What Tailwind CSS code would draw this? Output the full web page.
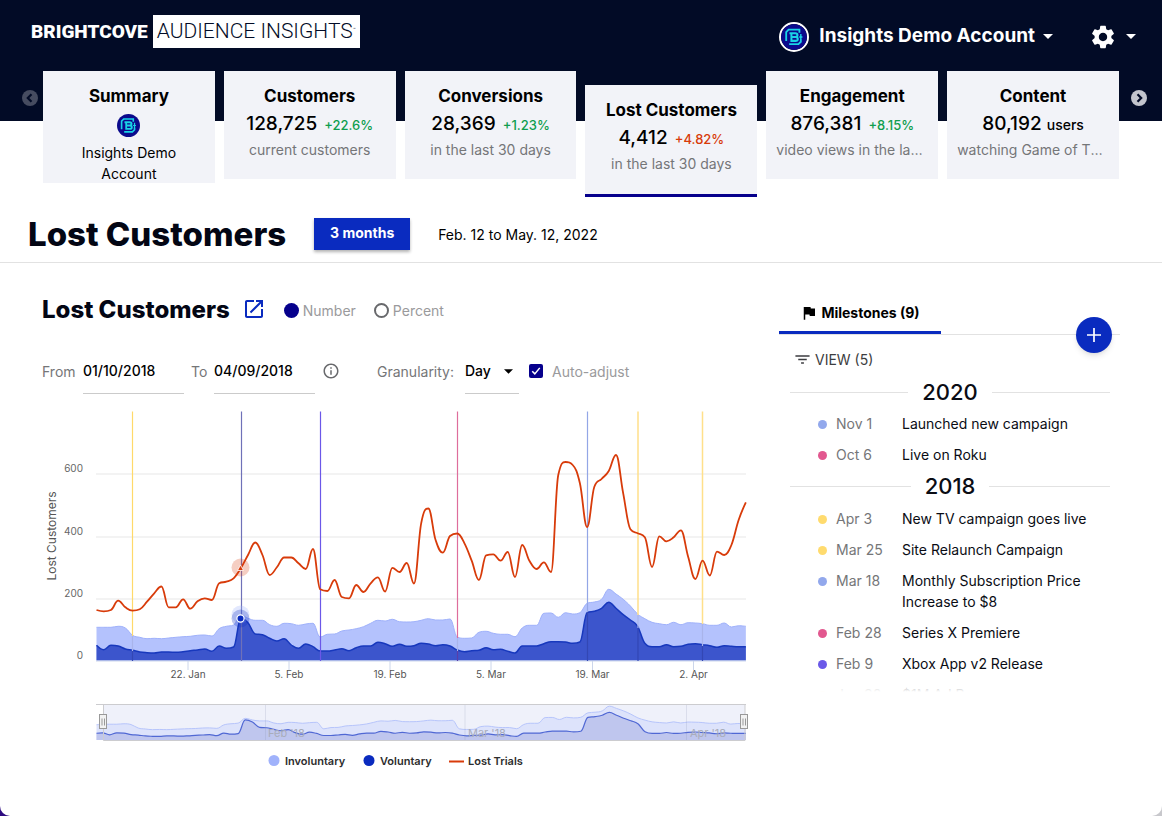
<!DOCTYPE html>
<html lang="en">
<head>
<meta charset="utf-8">
<meta name="viewport" content="width=device-width, initial-scale=1">
<title>Audience Insights - Lost Customers</title>
<script src="https://cdn.jsdelivr.net/npm/@tailwindcss/browser@4"></script>
</head>
<body class="bg-linear-to-r from-[#2d0a80] to-[#c8c8cc] font-['Inter',sans-serif] text-black">
<svg class="hidden" aria-hidden="true">
  <symbol id="brand" viewBox="0 0 24 24">
    <circle cx="12" cy="12" r="12" fill="#0b0a8c"/>
    <path d="M17 8V5.200H7L4.800 7.400v8.400M7.500 18.600h8.600l2.200-2.200v-2" fill="none" stroke="#19d3e6" stroke-width="1.700"/>
    <path d="M18.300 9.200v5.600M16.800 12h3" fill="none" stroke="#19d3e6" stroke-width="1.300"/>
    <path d="M7.800 8.600h5.400q2 0 2 1.700t-2 1.700h-3.400 3.600q2.100 0 2.100 1.800t-2.100 1.800H9.600V8.600" fill="none" stroke="#19d3e6" stroke-width="1.900"/>
  </symbol>
</svg>
<div class="min-h-screen bg-white rounded-b-[10px] overflow-hidden">
  <header class="h-[121px] bg-[#020b26] pl-[31px] pr-[26px]">
    <div class="h-[73px] flex items-center justify-between">
      <a href="#" class="flex items-center gap-[5px] text-white -mt-[10px] whitespace-nowrap font-['Roboto',sans-serif]">
        <span class="font-black text-[19px] leading-8">BRIGHTCOVE</span>
        <span class="bg-white text-[#020b26] h-[33px] w-[207px] flex items-center justify-center font-light text-[21px]">AUDIENCE INSIGHTS<sup class="text-[5px]">™</sup></span>
      </a>
      <div class="flex items-center">
        <button class="flex items-center text-white font-bold text-[19px]">
          <svg class="size-[30px] rounded-full border-2 border-white mr-[10px]"><use href="#brand"/></svg>
          Insights Demo Account
          <svg class="w-[10px] h-[5px] ml-2" viewBox="0 0 10 5"><path d="M0 0h10L5 5z" fill="#fff"/></svg>
        </button>
        <button class="flex items-center ml-9 gap-[9px]" aria-label="Settings">
          <svg class="size-[28px]" viewBox="0 0 24 24" fill="#fff"><path d="M19.140 12.940c.04-.3.06-.61.06-.94 0-.32-.02-.64-.07-.94l2.030-1.580c.18-.14.23-.41.12-.61l-1.920-3.320c-.12-.22-.37-.29-.59-.22l-2.390.96c-.5-.38-1.030-.7-1.620-.94l-.36-2.540c-.04-.24-.24-.41-.48-.41h-3.840c-.24 0-.43.17-.47.41l-.36 2.540c-.59.24-1.130.57-1.620.94l-2.390-.96c-.22-.08-.47 0-.59.22L2.740 8.870c-.12.21-.08.47.12.61l2.030 1.580c-.05.3-.09.63-.09.94s.02.64.07.94l-2.030 1.580c-.18.14-.23.41-.12.61l1.920 3.320c.12.22.37.29.59.22l2.390-.96c.5.38 1.030.7 1.620.94l.36 2.540c.05.24.24.41.48.41h3.840c.24 0 .44-.17.47-.41l.36-2.540c.59-.24 1.130-.56 1.620-.94l2.390.96c.22.08.47 0 .59-.22l1.920-3.320c.12-.22.07-.47-.12-.61l-2.010-1.580zM12 15.600c-1.980 0-3.600-1.620-3.600-3.600s1.620-3.600 3.600-3.600 3.600 1.620 3.600 3.600-1.620 3.600-3.600 3.600z"/></svg>
          <svg class="w-[10px] h-[5px]" viewBox="0 0 10 5"><path d="M0 0h10L5 5z" fill="#fff"/></svg>
        </button>
      </div>
    </div>
  </header>

  <nav class="relative -mt-[50px] flex items-start pl-[22px] pr-[15px] h-[126px]" aria-label="Metrics">
    <button class="mt-[19px] mr-[5px] shrink-0 text-[#464c60]" aria-label="Previous"><svg class="size-4" viewBox="0 0 16 16"><circle cx="8" cy="8" r="8" fill="currentColor"/><path d="M9.500 4.200 5.800 8l3.700 3.800" fill="none" stroke="#020b26" stroke-width="2.200"/></svg></button>
    <div class="flex-1 grid grid-cols-6 gap-[9px] items-start text-center">
      <a href="#" class="bg-[#f2f3f8] h-28 pt-[13px] px-[10px] block">
        <h3 class="font-bold text-[17px] leading-6">Summary</h3>
        <svg class="size-[23px] mx-auto mt-[6px]"><use href="#brand"/></svg>
        <p class="text-[14px] leading-[21px] mt-[5px] px-5">Insights Demo Account</p>
      </a>
      <a href="#" class="bg-[#f2f3f8] h-[108px] pt-[13px] px-[10px] block">
        <h3 class="font-bold text-[17px] leading-6">Customers</h3>
        <p class="text-[19px] leading-8 font-medium whitespace-nowrap">128,725 <span class="text-[13px] text-[#0f9d4e] ml-[2px]">+22.6%</span></p>
        <p class="text-[14px] leading-[18px] text-[#757678] truncate">current customers</p>
      </a>
      <a href="#" class="bg-[#f2f3f8] h-[108px] pt-[13px] px-[10px] block">
        <h3 class="font-bold text-[17px] leading-6">Conversions</h3>
        <p class="text-[19px] leading-8 font-medium whitespace-nowrap">28,369 <span class="text-[13px] text-[#0f9d4e] ml-[2px]">+1.23%</span></p>
        <p class="text-[14px] leading-[18px] text-[#757678] truncate">in the last 30 days</p>
      </a>
      <a href="#" aria-current="page" class="bg-[#f2f3f8] h-28 mt-[14px] pt-[13px] px-[10px] block border-b-[3px] border-[#06008c]">
        <h3 class="font-bold text-[17px] leading-6">Lost Customers</h3>
        <p class="text-[19px] leading-8 font-medium whitespace-nowrap">4,412 <span class="text-[13px] text-[#d83b0a] ml-[2px]">+4.82%</span></p>
        <p class="text-[14px] leading-[18px] text-[#757678] truncate">in the last 30 days</p>
      </a>
      <a href="#" class="bg-[#f2f3f8] h-[108px] pt-[13px] px-[10px] block">
        <h3 class="font-bold text-[17px] leading-6">Engagement</h3>
        <p class="text-[19px] leading-8 font-medium whitespace-nowrap">876,381 <span class="text-[13px] text-[#0f9d4e] ml-[2px]">+8.15%</span></p>
        <p class="text-[14px] leading-[18px] text-[#757678] truncate">video views in the last 30 days</p>
      </a>
      <a href="#" class="bg-[#f2f3f8] h-[108px] pt-[13px] px-[10px] block">
        <h3 class="font-bold text-[17px] leading-6">Content</h3>
        <p class="text-[19px] leading-8 font-medium whitespace-nowrap">80,192 <span class="text-[14px]">users</span></p>
        <p class="text-[14px] leading-[18px] text-[#757678] truncate">watching Game of Thrones</p>
      </a>
    </div>
    <button class="mt-[19px] ml-3 shrink-0 text-[#c3c5cd]" aria-label="Next"><svg class="size-4" viewBox="0 0 16 16"><circle cx="8" cy="8" r="8" fill="currentColor"/><path d="M6.500 4.200 10.200 8l-3.700 3.800" fill="none" stroke="#020b26" stroke-width="2.200"/></svg></button>
  </nav>

  <div class="flex items-center h-[66px] pt-[9px] pl-7 border-b border-[#e2e2e2]">
    <h1 class="font-extrabold text-[33px] leading-10 text-[#030614]">Lost Customers</h1>
    <button class="ml-7 h-8 w-24 bg-[#0a2bbf] text-white text-[14px] leading-5 pb-[2px] font-bold shadow-[0_2px_3px_rgba(0,0,0,0.3)]">3 months</button>
    <span class="ml-7 text-[14px]">Feb. 12 to May. 12, 2022</span>
  </div>

  <main class="flex items-start gap-[27px] pl-[42px] pr-[42px] pt-[30px]">
    <section class="flex-1 min-w-0">
      <div class="flex items-center h-[34px]">
        <h2 class="font-extrabold text-[24px] leading-8 text-[#030614]">Lost Customers</h2>
        <a href="#" class="ml-3 mb-[3px]" aria-label="Open in new window"><svg class="size-6" viewBox="0 0 24 24" fill="#0a2bbf"><path d="M19 19H5V5h7V3H5c-1.110 0-2 .9-2 2v14c0 1.100.89 2 2 2h14c1.100 0 2-.9 2-2v-7h-2v7zM14 3v2h3.590l-9.830 9.830 1.410 1.410L19 6.410V10h2V3h-7z"/></svg></a>
        <label class="flex items-center gap-1 ml-[18px] text-[14px] text-[#9a9a9c]"><input type="radio" name="mode" checked class="appearance-none size-[15px] rounded-full bg-[#06008c]">Number</label>
        <label class="flex items-center gap-1 ml-[18px] text-[14px] text-[#9a9a9c]"><input type="radio" name="mode" class="appearance-none size-[15px] rounded-full border-2 border-[#68696c]">Percent</label>
      </div>
      <div class="flex items-center mt-[21px] h-[46px] text-[14px] text-[#757678]">
        <label for="from" class="w-[41px]">From</label>
        <input id="from" type="text" value="01/10/2018" class="w-[101px] h-[46px] border-b border-[#cbcbcb] text-black font-medium">
        <label for="to" class="ml-[7px] w-[23px]">To</label>
        <input id="to" type="text" value="04/09/2018" class="w-[101px] h-[46px] border-b border-[#cbcbcb] text-black font-medium">
        <svg class="size-[18px] ml-[7px]" viewBox="0 0 24 24" fill="#68696c"><path d="M11 7h2v2h-2zm0 4h2v6h-2zm1-9C6.480 2 2 6.480 2 12s4.480 10 10 10 10-4.480 10-10S17.520 2 12 2zm0 18c-4.410 0-8-3.590-8-8s3.590-8 8-8 8 3.590 8 8-3.590 8-8 8z"/></svg>
        <label for="gran" class="ml-[37px] w-[88px]">Granularity:</label>
        <div class="relative">
          <select id="gran" class="appearance-none w-[54px] h-[46px] border-b border-[#cbcbcb] text-black font-medium"><option>Day</option><option>Week</option></select>
          <svg class="absolute right-[6px] top-[21px] w-[9px] h-[5px] pointer-events-none" viewBox="0 0 10 5"><path d="M0 0h10L5 5z"/></svg>
        </div>
        <label class="flex items-center ml-[10px] gap-[9px] text-[#9a9a9c]">
          <span class="relative flex"><input type="checkbox" checked class="appearance-none size-[14px] rounded-[2px] bg-[#06008c]"><svg class="absolute inset-0 size-[14px] pointer-events-none" viewBox="0 0 13 13"><path d="M3 6.800 5.400 9.200 10 3.600" fill="none" stroke="#fff" stroke-width="1.400"/></svg></span>
          Auto-adjust
        </label>
      </div>

      <svg id="chart" class="block w-full mt-[11px]" viewBox="42 405 710 370" role="img" aria-label="Lost customers chart">
        <g stroke="#efefef" stroke-width="1.500"><path d="M96 474H746M96 537H746M96 599H746"/></g>
        <g font-size="10" fill="#666" text-anchor="end"><text x="83" y="472">600</text><text x="83" y="535">400</text><text x="83" y="597">200</text><text x="83" y="659">0</text></g>
        <text transform="translate(56 536) rotate(-90)" text-anchor="middle" font-size="12" fill="#555">Lost Customers</text>
        <path id="inv" fill="#b4c2fd"/><path id="invLine" fill="none" stroke="#9fb1fb"/>
        <path id="vol" fill="#3c55cc"/><path id="volLine" fill="none" stroke="#1738bd" stroke-width="1.500"/>
        <path d="M96 661H746M188 661v9M289 661v9M390 661v9M491 661v9M592.500 661v9M693.500 661v9" stroke="#ccd6eb" fill="none"/>
        <g stroke-width="1.200">
          <path d="M132.500 411.500V636" stroke="#ffd96a"/><path d="M638 411.500V615M702.500 411.500V624" stroke="#ffe08a" stroke-width="1.500"/>
          <path d="M241.500 411.500V661" stroke="#6f71b8"/><path d="M320.500 411.500V661" stroke="#6b57e8"/>
          <path d="M457.500 411.500V638" stroke="#de6d9c"/><path d="M587.500 411.500V612" stroke="#93a6e6"/>
        </g>
        <path d="M132.500 651V661M638 628V661M702.500 646V661M587.500 612V661" stroke="#3347b4" stroke-width="1.200"/><path d="M457.500 651V661" stroke="#5a3ea8" stroke-width="1.200"/><path d="M132.500 636V651M638 615V628M702.500 624V646M457.500 638V651" stroke="#a9b4ea" stroke-width="1.200"/>
        <path id="trials" fill="none" stroke="#d83b0a" stroke-width="1.800" stroke-linejoin="round"/>
        <circle cx="240.500" cy="567.500" r="9" fill="#d83b0a" fill-opacity=".25"/><path d="M240.500 565l3 5.500h-6z" fill="#d83b0a" stroke="#fff" stroke-width=".8"/>
        <circle cx="240.500" cy="614.500" r="9" fill="#a0b2fb" fill-opacity=".3"/><circle cx="240.500" cy="618.500" r="9" fill="#0a2bbf" fill-opacity=".27"/><circle cx="240.500" cy="618.500" r="3.600" fill="#0a2bbf" stroke="#fff" stroke-width="1.200"/>
        <g font-size="10" fill="#555" text-anchor="middle"><text x="188" y="678">22. Jan</text><text x="289" y="678">5. Feb</text><text x="390" y="678">19. Feb</text><text x="491" y="678">5. Mar</text><text x="592.500" y="678">19. Mar</text><text x="693.500" y="678">2. Apr</text></g>

        <rect x="103" y="704" width="642" height="37" fill="#eff1fa"/>
        <path id="nInv" fill="#dde3fb"/><path id="nInvLine" fill="none" stroke="#b7c5fb"/>
        <path id="nVol" fill="#bfc6ee"/><path id="nVolLine" fill="none" stroke="#5068d4" stroke-width="1.200"/>
        <path d="M265.500 704v37M465 704v37M686.500 704v37" stroke="#8890b0" stroke-opacity=".2"/>
        <path d="M96 704.500H746M103.500 704v36.500H745V704" fill="none" stroke="#cccccf"/>
        <g font-size="11" fill="#a9adbb"><text x="268" y="737">Feb '18</text><text x="468" y="737">Mar '18</text><text x="690" y="737">Apr '18</text></g>
        <g fill="#f2f2f2" stroke="#999"><rect x="99.500" y="714.500" width="7" height="14"/><path d="M102 718.500v7M104.500 718.500v7"/><rect x="740.500" y="714.500" width="7" height="14"/><path d="M743 718.500v7M745.500 718.500v7"/></g>
        <circle cx="274" cy="760.500" r="5.500" fill="#a0b2fb"/><circle cx="369" cy="760.500" r="5.500" fill="#0a2bbf"/><path d="M449 761.500h15" stroke="#d83b0a" stroke-width="2"/>
        <g font-size="11" font-weight="600" fill="#2d2d2d"><text x="285" y="765">Involuntary</text><text x="380" y="765">Voluntary</text><text x="468" y="765">Lost Trials</text></g>
      </svg>
    </section>

    <aside class="w-[341px] shrink-0">
      <div class="relative flex items-end h-[42px] border-b border-[#e2e2e2]">
        <button class="flex items-center justify-center gap-[3px] w-[162px] h-10 font-bold text-[14px] border-b-[3px] border-[#0a2bbf] text-black"><svg class="size-[18px]" viewBox="0 0 24 24"><path d="M14.400 6 14 4H5v17h2v-7h5.600l.4 2h7V6z"/></svg>Milestones (9)</button>
        <button class="absolute right-2 -bottom-[19px] size-9 rounded-full bg-[#0a2bbf] shadow-md flex items-center justify-center" aria-label="Add milestone"><svg class="size-[14px]" viewBox="0 0 14 14"><path d="M7 0v14M0 7h14" stroke="#fff" stroke-width="1.700"/></svg></button>
      </div>
      <button class="flex items-center gap-1 ml-[15px] mt-[14px] h-5 text-[14px] text-[#3c3d40]"><svg class="size-[17px]" viewBox="0 0 24 24" fill="#3c3d40"><path d="M10 18h4v-2h-4v2zM2 6v2h20V6H2zm4 7h12v-2H6v2z"/></svg>VIEW (5)</button>
      <div class="relative ml-[11px] mr-[10px] mt-[7px] h-[316px] overflow-hidden text-[14px] leading-[21px] text-[#0a0c14]">
        <div class="flex items-center gap-[14px] h-8 text-[22px] font-medium"><hr class="flex-1 border-[#e2e2e2]">2020<hr class="flex-1 border-[#e2e2e2]"></div>
        <ul class="pl-7">
          <li class="flex py-[5px]"><i class="size-[9px] rounded-full bg-[#92a8ec] mt-[7px] mr-[9px]"></i><span class="w-[66px] text-[#757678]">Nov 1</span><span class="flex-1">Launched new campaign</span></li>
          <li class="flex py-[5px]"><i class="size-[9px] rounded-full bg-[#e2588f] mt-[7px] mr-[9px]"></i><span class="w-[66px] text-[#757678]">Oct 6</span><span class="flex-1">Live on Roku</span></li>
        </ul>
        <div class="flex items-center gap-[14px] h-[33px] text-[22px] font-medium"><hr class="flex-1 border-[#e2e2e2]">2018<hr class="flex-1 border-[#e2e2e2]"></div>
        <ul class="pl-7">
          <li class="flex py-[5px]"><i class="size-[9px] rounded-full bg-[#ffdb6e] mt-[7px] mr-[9px]"></i><span class="w-[66px] text-[#757678]">Apr 3</span><span class="flex-1">New TV campaign goes live</span></li>
          <li class="flex py-[5px]"><i class="size-[9px] rounded-full bg-[#ffdb6e] mt-[7px] mr-[9px]"></i><span class="w-[66px] text-[#757678]">Mar 25</span><span class="flex-1">Site Relaunch Campaign</span></li>
          <li class="flex py-[5px]"><i class="size-[9px] rounded-full bg-[#92a8ec] mt-[7px] mr-[9px]"></i><span class="w-[66px] text-[#757678]">Mar 18</span><span class="flex-1">Monthly Subscription Price Increase to $8</span></li>
          <li class="flex py-[5px]"><i class="size-[9px] rounded-full bg-[#e2588f] mt-[7px] mr-[9px]"></i><span class="w-[66px] text-[#757678]">Feb 28</span><span class="flex-1">Series X Premiere</span></li>
          <li class="flex py-[5px]"><i class="size-[9px] rounded-full bg-[#6a59e8] mt-[7px] mr-[9px]"></i><span class="w-[66px] text-[#757678]">Feb 9</span><span class="flex-1">Xbox App v2 Release</span></li>
          <li class="flex py-[5px]"><i class="size-[9px] rounded-full bg-[#ffdb6e] mt-[7px] mr-[9px]"></i><span class="w-[66px] text-[#757678]">Jan 30</span><span class="flex-1">$1M Ad Buy</span></li>
        </ul>
        <div class="absolute inset-x-0 bottom-0 h-4 bg-linear-to-b from-white/20 to-white"></div>
      </div>
    </aside>
  </main>
</div>
<script>
const trials=[610,611.3,610,600.7,607.3,610.7,609.3,601.7,593.3,586.5,607.3,607.3,599.3,608.7,601.3,598.3,600,583.3,581.7,578.3,568.3,555,542.5,555,575,567.3,557.5,557.5,563.3,569,549,589.3,591,580,597,598.3,585,592,583.3,577.3,591.5,567.8,572,563,583.5,523.3,508.5,540,552.7,536,533.5,543.3,560.7,580,555.3,554.3,560.7,552,577,545,560.7,569,562.3,572,475,462,465,483.3,527,486.700,479,471,455,493.3,529.3,533.3,537.3,567,536.3,541.3,537.3,530.3,556.7,579,560.7,575.5,551.6,555,545,520,502.3];
const inv=[627.3,627.3,627.3,626.3,628,635.3,637.3,638.7,638.3,638.7,638,637.3,636.7,636.3,635.3,635,636,628.7,626.3,625,615,618.3,620.3,620.3,624.7,626.3,623.3,623.7,625.3,624,623.3,637,634.3,634,631,630,628.7,626.7,623.3,620.3,621,619.3,621.7,622,621.7,620.3,618.7,620,620,619,637,638.3,638,632.3,631.3,633.3,634.3,634.3,636.7,628,625.3,625.3,613.3,613,617.3,612.7,614,612.7,603.3,602,599.3,589.3,594,599.3,606,614,618.7,622.3,623.7,624.7,622.3,624.7,622.7,623,623.7,625.3,625.3,623,627,625.7,626.3];
const vol=[645.3,649.7,645.3,646,649,650.3,652,652.7,653,652,652,652.3,651.7,650.7,650,649,651.3,646,648.3,647,618.3,622.7,634,634.7,638.3,641,638.7,645,648.3,644,646.7,651,651,650,648.7,650.7,647.7,646,646,642.3,643.7,646.3,644.3,646.3,645.7,643.3,644,645.7,644.7,646,650,651.7,650.7,650.3,647.7,649.7,649.3,651.3,653,646,646,646,643.7,641.7,641.7,642,643.3,642,612.7,611.3,608.3,602.3,608.3,614.7,620,626.3,643.3,646.7,646.7,644.7,646.7,646.3,644.3,643.7,644.7,645.7,647.3,645.7,646.3,646.7,646.7];

// Cubic spline through the points, with control points kept inside each pair of neighbours
function spline(p){
  let d='M'+p[0],r=p[0];
  for(let i=1;i<p.length;i++){
    const [x,y]=p[i],[px,py]=p[i-1];
    let left=[x,y],right=[x,y];
    if(i<p.length-1){
      const [nx,ny]=p[i+1];
      let lx=(1.5*x+px)/2.5,ly=(1.5*y+py)/2.5,rx=(1.5*x+nx)/2.5,ry=(1.5*y+ny)/2.5;
      const c=(ry-ly)*(rx-x)/(rx-lx)+y-ry;
      ly+=c;ry+=c;
      if(ly>py&&ly>y){ly=Math.max(py,y);ry=2*y-ly}else if(ly<py&&ly<y){ly=Math.min(py,y);ry=2*y-ly}
      if(ry>ny&&ry>y){ry=Math.max(ny,y);ly=2*y-ry}else if(ry<ny&&ry<y){ry=Math.min(ny,y);ly=2*y-ry}
      left=[lx,ly];right=[rx,ry];
    }
    d+='C'+r+' '+left+' '+[x,y];
    r=right;
  }
  return d;
}
const main=a=>a.map((v,i)=>[96.5+7.215*i,v]);
const mini=a=>[[96.5,740-(660.5-a[0]-1)*.475]].concat(a.map((v,i)=>[102.5+7.139*i,740-(660.5-v)*.475]),[[746,740-(660.5-a[90])*.475]]);
const set=(id,d)=>document.getElementById(id).setAttribute('d',d);
set('trials',spline(main(trials)));
[['inv',inv],['vol',vol]].forEach(([id,a])=>{
  const m=spline(main(a)),n=spline(mini(a)),c=id==='inv'?'nInv':'nVol';
  set(id+'Line',m);set(id,m+'V660.5H96.500Z');
  set(c+'Line',n);set(c,n+'V740H96.500Z');
});
</script>
</body>
</html>
